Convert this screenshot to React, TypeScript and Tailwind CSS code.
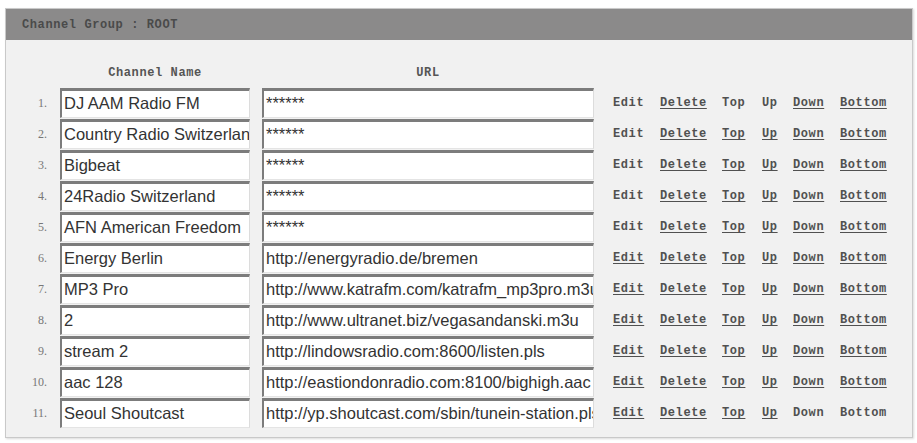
const rows = [
  { name: "DJ AAM Radio FM", url: "******" },
  { name: "Country Radio Switzerland", url: "******" },
  { name: "Bigbeat", url: "******" },
  { name: "24Radio Switzerland", url: "******" },
  { name: "AFN American Freedom", url: "******" },
  { name: "Energy Berlin", url: "http://energyradio.de/bremen" },
  { name: "MP3 Pro", url: "http://www.katrafm.com/katrafm_mp3pro.m3u" },
  { name: "2", url: "http://www.ultranet.biz/vegasandanski.m3u" },
  { name: "stream 2", url: "http://lindowsradio.com:8600/listen.pls" },
  { name: "aac 128", url: "http://eastiondonradio.com:8100/bighigh.aac" },
  { name: "Seoul Shoutcast", url: "http://yp.shoutcast.com/sbin/tunein-station.pls" },
];

const mono = "font-['Liberation_Mono',monospace] text-[12px] font-bold tracking-[0.6px]";

function Action({ label, link, width }: { label: string; link: boolean; width: string }) {
  return (
    <span className={`${width} shrink-0 ${link ? "underline underline-offset-2" : ""}`}>{label}</span>
  );
}

function Field({ value, width }: { value: string; width: string }) {
  return (
    <div
      className={`${width} h-full shrink-0 overflow-hidden whitespace-nowrap border-t-[3px] border-l-2 border-r border-b border-t-[#7c7c7c] border-l-[#7c7c7c] border-r-[#dcdcdc] border-b-[#e4e4e4] bg-white pl-[2px] font-['Liberation_Sans',Arial,sans-serif] text-[16.5px] leading-[25px] text-[#333]`}
    >
      {value}
    </div>
  );
}

export default function App() {
  const last = rows.length - 1;
  return (
    <div className="h-[443px] w-[917px] bg-white pt-[8px] pl-[5px]">
      <div className="flex h-[430px] w-[908px] flex-col border border-[#c9c9c9] bg-[#f1f1f1] shadow-[1px_1px_2px_rgba(0,0,0,0.15)]">
        <div className={`flex h-[31px] items-center bg-[#8b8a8a] pl-[16px] text-[#4a4a4a] ${mono}`}>
          Channel Group : ROOT
        </div>
        <div className={`flex h-[16px] mt-[25px] items-center text-[#555] ${mono}`}>
          <div className="w-[54px] shrink-0" />
          <div className="w-[190px] shrink-0 text-center">Channel Name</div>
          <div className="w-[12px] shrink-0" />
          <div className="w-[332px] shrink-0 text-center">URL</div>
        </div>
        <div className="mt-[7px] flex flex-col gap-[1px]">
          {rows.map((r, i) => (
            <div key={i} className="flex h-[30px] items-center">
              <div className="w-[42px] shrink-0 pr-[1px] text-right font-['Liberation_Serif',serif] text-[12px] text-[#777]">
                {i + 1}.
              </div>
              <div className="w-[12px] shrink-0" />
              <Field value={r.name} width="w-[190px]" />
              <div className="w-[12px] shrink-0" />
              <Field value={r.url} width="w-[332px]" />
              <div className={`ml-[19px] flex text-[#505050] ${mono}`}>
                <Action label="Edit" link={i >= 5} width="w-[47px]" />
                <Action label="Delete" link width="w-[62px]" />
                <Action label="Top" link={i > 0} width="w-[40px]" />
                <Action label="Up" link={i > 0} width="w-[31px]" />
                <Action label="Down" link={i < last} width="w-[47px]" />
                <Action label="Bottom" link={i < last} width="w-[60px]" />
              </div>
            </div>
          ))}
        </div>
      </div>
    </div>
  );
}
